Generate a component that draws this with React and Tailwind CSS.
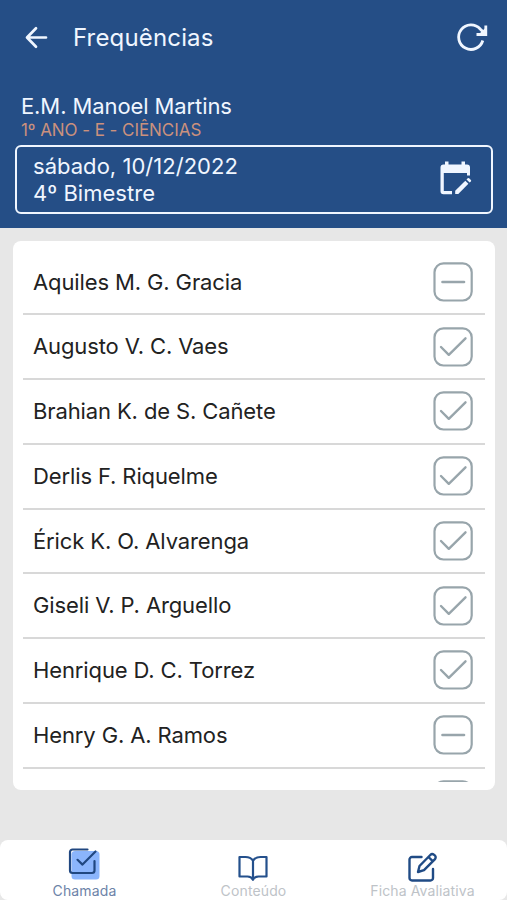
const students = [
  { name: 'Aquiles M. G. Gracia', present: false },
  { name: 'Augusto V. C. Vaes', present: true },
  { name: 'Brahian K. de S. Cañete', present: true },
  { name: 'Derlis F. Riquelme', present: true },
  { name: 'Érick K. O. Alvarenga', present: true },
  { name: 'Giseli V. P. Arguello', present: true },
  { name: 'Henrique D. C. Torrez', present: true },
  { name: 'Henry G. A. Ramos', present: false },
];

function BackIcon() {
  return (
    <svg className="h-6 w-6" viewBox="0 0 24 24" fill="none" stroke="currentColor" strokeWidth="2.7" strokeLinecap="round" strokeLinejoin="round">
      <path d="M21 11.500H2.500M11 2.200L2 11.500l9 9.300" />
    </svg>
  );
}

function RefreshIcon() {
  return (
    <svg className="h-[30px] w-8" viewBox="0 0 32 30" fill="none" stroke="currentColor" strokeWidth="2.8">
      <path d="M26.800 17.500A12.300 12.300 0 1 1 24.200 6L28 9.800" />
      <path d="M20.500 11.500H29.800V2.500" />
      <path d="M22.500 11.500L29.800 4.500V11.500Z" fill="currentColor" stroke="none" />
    </svg>
  );
}

function CalendarEditIcon() {
  return (
    <svg className="relative -top-0.5 left-px h-[34px] w-8" viewBox="0 0 32 34" fill="currentColor">
      <path fillRule="evenodd" d="M5 .5h3.500V3.500h13V.5h3.500V3.500h2A3 3 0 0 1 30 6.500V14.500H27V12H3.800V30H12v3.300H3.500A3 3 0 0 1 .5 30.300V6.500a3 3 0 0 1 3-3H5z" />
      <path d="M15.200 29.800L25.300 19.700L28.400 22.800L18.300 33H15.200Z" />
      <path d="M26.500 18.500L27.700 17.300Q28.400 16.700 29.100 17.300L30.900 19.100Q31.500 19.800 30.900 20.400L29.600 21.600Z" />
    </svg>
  );
}

function Checkbox({ checked }) {
  return (
    <svg className="h-10 w-10 shrink-0" viewBox="0 0 40 40" fill="none" stroke="#98a5ab" strokeWidth="2.200" strokeLinecap="round" strokeLinejoin="round">
      <rect x="1.500" y="1.300" width="37.200" height="37.200" rx="9" />
      {checked ? <path d="M8 20l7.800 7.800L32.500 11.300" strokeWidth="2.400" /> : <path d="M9.500 20H31" strokeWidth="2.600" />}
    </svg>
  );
}

function CheckTabIcon() {
  return (
    <svg className="relative right-px h-8 w-8" viewBox="0 0 32 32" fill="none" stroke="#204780" strokeWidth="2.200" strokeLinecap="round" strokeLinejoin="round">
      <rect x="3.500" y="3" width="28" height="28.500" rx="3.500" fill="#8bb5fc" stroke="none" />
      <path d="M19.500 1.500H4.500A2.500 2.500 0 0 0 2 4V22.500A2.500 2.500 0 0 0 4.500 25H24A2.500 2.500 0 0 0 26.500 22.500V13" />
      <path d="M9.500 11.800l5 4.800L27.500 3.500" />
    </svg>
  );
}

function BookIcon() {
  return (
    <svg className="relative right-px h-[27px] w-[30px]" viewBox="0 0 30 27" fill="none" stroke="#24508c" strokeWidth="2.200" strokeLinejoin="round">
      <path d="M15 6.700Q12.500 3 7.500 3H1.500V22.500H9.500Q13.500 22.500 15 25.800Q16.500 22.500 20.500 22.500H28.500V3H22.500Q17.500 3 15 6.700V25.500" />
    </svg>
  );
}

function EditIcon() {
  return (
    <svg className="h-[30px] w-[30px]" viewBox="0 0 30 30" fill="none" stroke="#204b85" strokeWidth="2.400" strokeLinecap="round" strokeLinejoin="round">
      <path d="M13.500 5H4a2.500 2.500 0 0 0-2.500 2.500V26A2.500 2.500 0 0 0 4 28.500H22.500A2.500 2.500 0 0 0 25 26V17" />
      <path d="M10 20l1.500-6L22.300 3Q24 1.300 26 2.800Q28.700 4.500 27 7.200L16 18.200ZM20.500 5l4.200 4.200" />
    </svg>
  );
}

export default function App() {
  return (
    <div className="flex h-[900px] w-[507px] flex-col overflow-hidden bg-[#e7e7e7] font-['Inter',sans-serif]">
      <header className="h-[228px] shrink-0 bg-[#254e86] text-[#f0f6ff]">
        <div className="flex h-[75px] items-center pr-[19px] pl-[25px]">
          <BackIcon />
          <h1 className="ml-6 flex-1 text-[24px] leading-[30px] tracking-[0.16px]">Frequências</h1>
          <RefreshIcon />
        </div>
        <div className="pt-[18px] pl-[21px]">
          <p className="text-[22px] leading-[26px] tracking-[-0.1px]">E.M. Manoel Martins</p>
          <p className="text-[17px] leading-[22px] tracking-[-0.06px] text-[#cb917d]">1º ANO - E - CIÊNCIAS</p>
        </div>
        <button className="mt-1 ml-[15px] flex h-[69px] w-[478px] items-center justify-between rounded-md border-[2.500px] border-[#f0f6ff] pr-5 pl-4 text-left">
          <span className="text-[22px] leading-[27px] tracking-[0.03px]">
            sábado, 10/12/2022
            <br />
            4º Bimestre
          </span>
          <CalendarEditIcon />
        </button>
      </header>

      <main className="mx-[13px] mt-[13px] h-[549px] w-[482px] shrink-0 rounded-lg bg-white px-[10px] pt-[9.500px]">
        <ul className="h-[531.500px] overflow-hidden">
          {students.map((s) => (
            <li key={s.name} className="flex h-[64.750px] items-center justify-between border-b-2 border-[#d8d8d8] pr-3 pl-[10px] text-[22px] text-[#222222]">
              <span className="pt-[0.500px] tracking-[-0.12px]">{s.name}</span>
              <Checkbox checked={s.present} />
            </li>
          ))}
          <li className="flex h-[64.750px] items-center justify-end border-b-2 border-[#d8d8d8] pr-3">
            <Checkbox checked={false} />
          </li>
        </ul>
      </main>

      <nav className="mt-[50px] grid h-[60px] shrink-0 grid-cols-3 rounded-lg bg-white text-center text-[14px] tracking-[0.130px]">
        <div className="flex flex-col items-center pt-2">
          <CheckTabIcon />
          <span className="mt-0.5 leading-[18px] text-[#6d83a8]">Chamada</span>
        </div>
        <div className="flex flex-col items-center pt-[14px]">
          <BookIcon />
          <span className="mt-px leading-[18px] text-[#bec3c8]">Conteúdo</span>
        </div>
        <div className="flex flex-col items-center pt-3">
          <EditIcon />
          <span className="leading-[18px] text-[#bec3c8]">Ficha Avaliativa</span>
        </div>
      </nav>
    </div>
  );
}
